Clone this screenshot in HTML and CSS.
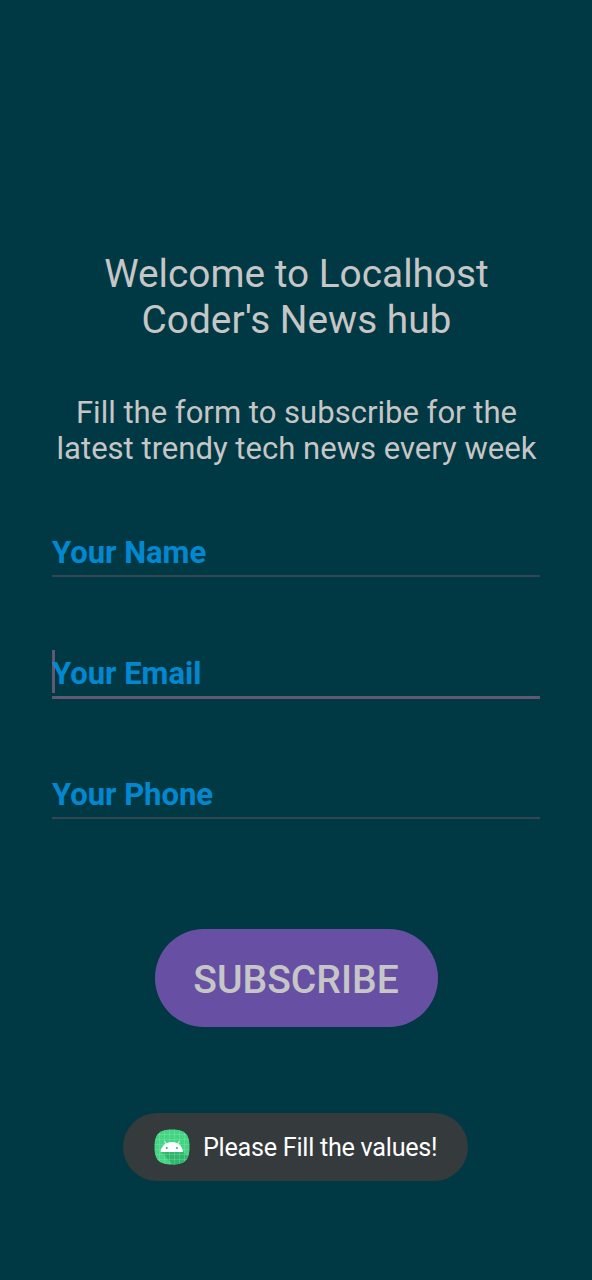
FILE: index.html
```
<!DOCTYPE html>
<html lang="en">
<head>
<meta charset="utf-8">
<title>News hub</title>
<link rel="stylesheet" href="styles.css">
</head>
<body>
<main class="screen">
  <h1 class="title">Welcome to Localhost<br>Coder's News hub</h1>
  <p class="intro">Fill the form to subscribe for the<br>latest trendy tech news every week</p>
  <div class="field">Your Name</div>
  <div class="field focused">Your Email<span class="caret"></span></div>
  <div class="field">Your Phone</div>
  <button class="subscribe">SUBSCRIBE</button>
  <div class="toast">
    <svg class="logo" viewBox="0 0 36 36">
      <defs><clipPath id="tile"><path d="M18 .5C31 .5 35.500 5 35.500 18S31 35.500 18 35.500.500 31 .500 18 5 .500 18 .500z"/></clipPath></defs>
      <g clip-path="url(#tile)">
        <path d="M0 0h36v36H0z" fill="#43d584"/>
        <path d="M7.500 23L19 36h17V29l-8-7z" fill="#32b66d"/>
        <path d="M5.500 0v36M10.500 0v36M15.500 0v36M20.500 0v36M25.500 0v36M30.500 0v36M0 5.500h36M0 10.500h36M0 15.500h36M0 20.500h36M0 25.500h36M0 30.500h36" stroke="#a0f0c0" stroke-opacity=".5" stroke-width=".5"/>
      </g>
      <path d="M6.500 23C7 17 12 13 18 13s10.500 4 11 10z" fill="#fff"/>
      <path d="M12.500 15.500l-2-3.500M23.500 15.500l2-3.500" stroke="#fff" stroke-width=".8"/>
      <circle cx="12.800" cy="19" r=".9" fill="#3a9567"/><circle cx="23" cy="19" r=".9" fill="#3a9567"/>
    </svg>
    <span class="message">Please Fill the values!</span>
  </div>
</main>
</body>
</html>
```
FILE: styles.css
```
* { box-sizing: border-box; }
body { margin: 0; background: #003944; font-family: Roboto, sans-serif; color: #c6c6c6; }
.screen { height: 1280px; padding: 251px 52px 0; display: flex; flex-direction: column; align-items: center; overflow: hidden; white-space: nowrap; }
.title { margin: 0 0 0 1px; font-size: 38.8px; line-height: 45.5px; font-weight: 400; text-align: center; }
.intro { margin: 53px -10px 0 -9px; font-size: 31.05px; line-height: 36px; text-align: center; }
.field { position: relative; width: 488px; height: 48px; margin-top: 62px; border-bottom: 2px solid #344653; color: #0288d1; font-size: 31px; line-height: 48px; font-weight: 700; }
.field + .field { margin-top: 73px; }
.field.focused { z-index: 0; height: 49px; border-bottom: 3px solid #5f5872; }
.focused + .field { margin-top: 72px; }
.caret { position: absolute; z-index: -1; left: 0; top: 0; width: 3px; height: 43px; background: #5f5872; }
.subscribe { width: 283px; height: 98px; margin: 110px 0 0; padding: 4px 0 0; border: 0; border-radius: 49px; background: #6750a4; color: #c6c6c6; font: 500 39.1px Roboto, sans-serif; }
.toast { width: 345px; height: 68px; margin: 86px 1px 0 0; padding-left: 31px; border-radius: 34px; background: #353a3c; display: flex; align-items: center; gap: 13px; color: #fff; font-size: 25.2px; letter-spacing: -.27px; }
.logo { width: 36px; height: 36px; }
.message { padding-top: 1px; }
```
